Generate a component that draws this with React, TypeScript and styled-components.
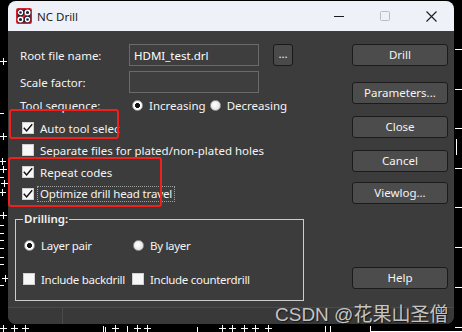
import React from "react";
import styled, { createGlobalStyle } from "styled-components";

const GlobalStyle = createGlobalStyle`
  html, body {
    margin: 0;
    padding: 0;
    background: #000;
  }
  body {
    width: 462px;
    height: 332px;
    overflow: hidden;
    font-family: "Noto Sans", "DejaVu Sans", sans-serif;
  }
`;

const Stage = styled.div`
  position: relative;
  width: 462px;
  height: 332px;
  padding: 1px 8px 0;
  box-sizing: border-box;
`;

const Backdrop = styled.svg`
  position: absolute;
  left: 0;
  top: 0;
`;

const Window = styled.div`
  position: relative;
  width: 446px;
  height: 323px;
  border-radius: 8px;
  overflow: hidden;
  background: #3c3c3c;
  display: flex;
  flex-direction: column;
`;

const TitleBar = styled.div`
  flex: none;
  height: 30px;
  display: flex;
  align-items: center;
  padding-left: 8px;
  background: #eef2f8;
  color: #1b1b1b;
  font-size: 11.5px;
`;

const TitleText = styled.span`
  flex: 1;
  margin-left: 5px;
`;

const Caption = styled.div`
  width: 46px;
  height: 30px;
  display: flex;
  align-items: center;
  justify-content: center;
`;

const Body = styled.div`
  flex: 1;
  display: flex;
  color: #f4f4f4;
  font-size: 11.5px;
`;

const Main = styled.div`
  width: 344px;
  box-sizing: border-box;
  padding: 13px 0 0 7px;
  display: flex;
  flex-direction: column;
`;

const FieldRow = styled.div<{ $mt?: number; $h?: number }>`
  display: flex;
  align-items: center;
  height: ${(p) => p.$h ?? 22}px;
  margin-top: ${(p) => p.$mt ?? 0}px;
  padding-left: 5px;
`;

const Label = styled.span`
  width: 109px;
  flex: none;
  white-space: nowrap;
`;

const TextBox = styled.div`
  width: 130px;
  height: 22px;
  box-sizing: border-box;
  border: 1px solid #6a6a6a;
  background: #3e3e3e;
  padding-left: 4px;
  display: flex;
  align-items: center;
  color: #fff;
`;

const BrowseButton = styled.div`
  margin-left: 14px;
  width: 20px;
  height: 22px;
  box-sizing: border-box;
  border: 1px solid #191919;
  border-radius: 3px;
  background: #4a4a4a;
  display: flex;
  align-items: center;
  justify-content: center;
  padding-bottom: 3px;
`;

const Option = styled.div<{ $ml?: number }>`
  display: flex;
  align-items: center;
  gap: 6px;
  margin-left: ${(p) => p.$ml ?? 0}px;
  white-space: nowrap;
`;

const RadioDot = styled.span<{ $on?: boolean }>`
  width: 11px;
  height: 11px;
  box-sizing: border-box;
  border-radius: 50%;
  border: 1px solid #9a9a9a;
  background: ${(p) =>
    p.$on
      ? "radial-gradient(circle, #111 0 2.2px, #fff 2.8px)"
      : "radial-gradient(circle at 40% 40%, #fff, #dcdcdc)"};
  flex: none;
`;

const CheckRow = styled.div<{ $h?: number }>`
  display: flex;
  align-items: center;
  gap: 6px;
  height: ${(p) => p.$h ?? 22}px;
  padding-left: 7px;
  white-space: nowrap;
`;

const Box = styled.span`
  width: 12px;
  height: 12px;
  box-sizing: border-box;
  background: #f7f7f7;
  border: 1px solid #d0d0d0;
  flex: none;
  display: flex;
`;

const CheckText = styled.span<{ $focused?: boolean }>`
  line-height: 13px;
  ${(p) =>
    p.$focused &&
    `
    border: 1px dotted #a0a0a0;
    padding: 0 2px 1px;
    margin-left: -3px;
    letter-spacing: -0.15px;
  `}
`;

const Group = styled.fieldset`
  margin: 7px 0 0 0;
  width: 289px;
  box-sizing: border-box;
  padding: 0 7px 13px 7px;
  border: 1px solid #cdcdcd;
`;

const GroupTitle = styled.legend`
  padding: 0 1px;
  font-weight: 600;
  line-height: 14px;
  color: #f2f2f2;
`;

const GroupGrid = styled.div<{ $mt: number }>`
  display: grid;
  grid-template-columns: 109px auto;
  align-items: center;
  height: 16px;
  margin-top: ${(p) => p.$mt}px;
  letter-spacing: -0.3px;
`;

const Side = styled.div`
  width: 96px;
  padding-top: 13px;
  display: flex;
  flex-direction: column;
`;

const Button = styled.div<{ $mt?: number }>`
  height: 22px;
  margin-top: ${(p) => p.$mt ?? 0}px;
  box-sizing: border-box;
  border: 1px solid #1b1b1b;
  border-radius: 3px;
  background: #4c4c4c;
  display: flex;
  align-items: center;
  justify-content: center;
  padding-bottom: 1px;
`;

const StatusBar = styled.div`
  flex: none;
  height: 17px;
  box-sizing: border-box;
  border-top: 1px solid #4a4a4a;
  background: #393939;
  display: flex;
`;

const StatusCell = styled.div`
  width: 54px;
  border-right: 1px solid #4a4a4a;
`;

const Mark = styled.div<{ $x: number; $y: number; $w: number; $h: number }>`
  position: absolute;
  left: ${(p) => p.$x}px;
  top: ${(p) => p.$y}px;
  width: ${(p) => p.$w}px;
  height: ${(p) => p.$h}px;
  box-sizing: border-box;
  border: 2.5px solid #f0201c;
  border-radius: 3px;
  pointer-events: none;
`;

const Watermark = styled.div`
  position: absolute;
  left: 275px;
  top: 299px;
  font-family: "Liberation Sans", "Noto Sans CJK SC", sans-serif;
  font-size: 19px;
  color: #c4c4c4;
  text-shadow: 1px 1px 1px rgba(0, 0, 0, 0.6);
  white-space: nowrap;
`;

const pluses: [number, number][] = [
  [3, 61], [3, 136], [2, 161], [3, 169], [4, 183], [2, 192], [3, 215],
  [5, 278], [3, 328], [14, 328], [25, 328], [115, 328], [137, 328],
  [147, 328], [222, 328], [232, 328], [244, 328], [255, 328], [268, 328],
];
const dashes: [number, number][] = [
  [0, 113], [0, 177], [0, 225], [0, 233], [0, 240], [0, 248], [0, 257],
  [0, 264], [0, 285],
];
const ticks: [number, number][] = [
  [105, 327], [103, 326], [127, 326], [197, 327], [325, 326], [330, 326],
];
const rightLines = [49, 89, 128, 168, 207, 247, 287, 327];

function Canvas() {
  return (
    <Backdrop width={462} height={332}>
      <g stroke="#fff" strokeWidth={1} shapeRendering="crispEdges">
        {pluses.map(([x, y], i) => (
          <g key={`p${i}`}>
            <line x1={x - 3} y1={y + 0.5} x2={x + 4} y2={y + 0.5} />
            <line x1={x + 0.5} y1={y - 3} x2={x + 0.5} y2={y + 4} />
          </g>
        ))}
        {dashes.map(([x, y], i) => (
          <line key={`d${i}`} x1={x} y1={y + 0.5} x2={x + 4} y2={y + 0.5} />
        ))}
        {ticks.map(([x, y], i) => (
          <line key={`t${i}`} x1={x + 0.5} y1={y} x2={x + 0.5} y2={y + 6} />
        ))}
        {rightLines.map((y) => (
          <line key={`r${y}`} x1={455} y1={y + 0.5} x2={462} y2={y + 0.5} />
        ))}
        <line x1={456.5} y1={139} x2={456.5} y2={155} />
        <line x1={370} y1={331.5} x2={462} y2={331.5} />
        <line x1={370.5} y1={326} x2={370.5} y2={332} />
      </g>
    </Backdrop>
  );
}

function AppIcon() {
  return (
    <svg width="16" height="16" viewBox="0 0 16 16">
      <rect x="0.75" y="0.75" width="14.5" height="14.5" rx="1.5" fill="#1b2338" stroke="#d6222c" strokeWidth="1.5" />
      <line x1="11.5" y1="4.5" x2="4.5" y2="11.5" stroke="#e3262e" strokeWidth="1.8" />
      <circle cx="4.5" cy="4.5" r="2" fill="#1b2338" stroke="#fff" strokeWidth="1.3" />
      <circle cx="11.5" cy="4.5" r="2.3" fill="#1b2338" stroke="#fff" strokeWidth="1.4" />
      <circle cx="4.5" cy="11.5" r="2.3" fill="#1b2338" stroke="#fff" strokeWidth="1.4" />
      <circle cx="11.5" cy="11.5" r="2" fill="#1b2338" stroke="#fff" strokeWidth="1.3" />
    </svg>
  );
}

function Tick() {
  return (
    <svg width="10" height="10" viewBox="0 0 10 10">
      <polyline points="0.8,4.8 3.6,8 9.2,1.2" fill="none" stroke="#111" strokeWidth="1.4" />
    </svg>
  );
}

function Check({ on, children, focused }: { on?: boolean; children: React.ReactNode; focused?: boolean }) {
  return (
    <>
      <Box>{on && <Tick />}</Box>
      <CheckText $focused={focused}>{children}</CheckText>
    </>
  );
}

export default function App() {
  return (
    <>
      <GlobalStyle />
      <Stage>
        <Canvas />
        <Window>
          <TitleBar>
            <AppIcon />
            <TitleText>NC Drill</TitleText>
            <Caption>
              <svg width="10" height="10">
                <line x1="0" y1="5.5" x2="10" y2="5.5" stroke="#1b1b1b" />
              </svg>
            </Caption>
            <Caption>
              <svg width="10" height="10">
                <rect x="0.5" y="0.5" width="9" height="9" rx="1" fill="none" stroke="#b9bcc2" />
              </svg>
            </Caption>
            <Caption>
              <svg width="11" height="11">
                <path d="M0.5 0.5 L10.5 10.5 M10.5 0.5 L0.5 10.5" stroke="#1b1b1b" strokeWidth="1.1" />
              </svg>
            </Caption>
          </TitleBar>

          <Body>
            <Main>
              <FieldRow>
                <Label>Root file name:</Label>
                <TextBox>HDMI_test.drl</TextBox>
                <BrowseButton>...</BrowseButton>
              </FieldRow>
              <FieldRow $mt={5}>
                <Label>Scale factor:</Label>
                <TextBox />
              </FieldRow>
              <FieldRow $mt={4} $h={16}>
                <Label>Tool sequence:</Label>
                <Option $ml={3}>
                  <RadioDot $on />
                  Increasing
                </Option>
                <Option $ml={4}>
                  <RadioDot />
                  Decreasing
                </Option>
              </FieldRow>

              <div style={{ height: 4 }} />
              <CheckRow>
                <Check on>Auto tool selec</Check>
              </CheckRow>
              <CheckRow>
                <Check>Separate files for plated/non-plated holes</Check>
              </CheckRow>
              <CheckRow>
                <Check on>Repeat codes</Check>
              </CheckRow>
              <CheckRow>
                <Check on focused>
                  Optimize drill head travel
                </Check>
              </CheckRow>

              <Group>
                <GroupTitle>Drilling:</GroupTitle>
                <GroupGrid $mt={11}>
                  <Option $ml={1}>
                    <RadioDot $on />
                    Layer pair
                  </Option>
                  <Option $ml={1}>
                    <RadioDot />
                    By layer
                  </Option>
                </GroupGrid>
                <GroupGrid $mt={18}>
                  <Option>
                    <Check>Include backdrill</Check>
                  </Option>
                  <Option>
                    <Check>Include counterdrill</Check>
                  </Option>
                </GroupGrid>
              </Group>
            </Main>

            <Side>
              <Button>Drill</Button>
              <Button $mt={16}>Parameters...</Button>
              <Button $mt={12}>Close</Button>
              <Button $mt={12}>Cancel</Button>
              <Button $mt={10}>Viewlog...</Button>
              <Button $mt={63}>Help</Button>
            </Side>
          </Body>

          <StatusBar>
            <StatusCell />
          </StatusBar>
        </Window>

        <Mark $x={9} $y={109} $w={110} $h={30} />
        <Mark $x={8} $y={157} $w={154} $h={50} />
        <Watermark>CSDN @花果山圣僧</Watermark>
      </Stage>
    </>
  );
}
